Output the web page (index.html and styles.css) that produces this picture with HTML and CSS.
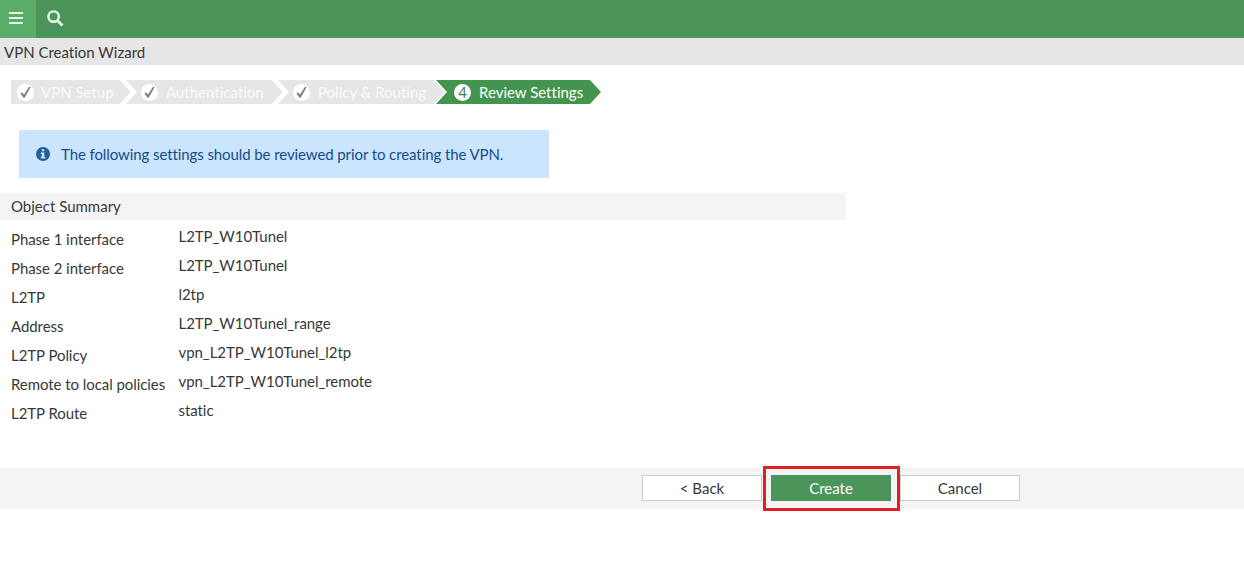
FILE: index.html
```html
<!DOCTYPE html>
<html lang="en">
<head>
  <meta charset="UTF-8" />
  <meta name="viewport" content="width=device-width, initial-scale=1.0"/>
  <title>VPN Creation Wizard</title>
  <link rel="stylesheet" href="styles.css">
</head>
<body>

  <div class="topbar">
    <div class="menu">
      <svg width="14" height="12" viewBox="0 0 14 12"><path d="M0 1h14M0 6h14M0 11h14" stroke="#e4ffe4" stroke-width="2"/></svg>
    </div>
    <svg class="search" width="17" height="17" viewBox="0 0 17 17" fill="none" stroke="#e4ffe4"><circle cx="6.6" cy="6.6" r="5.2" stroke-width="2.4"/><path d="M10.4 10.4l5 5" stroke-width="2.8"/></svg>
  </div>

  <h1 class="title">VPN Creation Wizard</h1>

  <div class="steps">
    <div class="step first">
      <svg class="dot" viewBox="0 0 17 17"><circle cx="8.5" cy="8.5" r="8.5" fill="#fff"/><path d="M3.4 9.2l1.7-1 1.9 2.4 5-7.8 1.8.2-6.1 10.7H6.3z" fill="#848484"/></svg>
      <span>VPN Setup</span>
    </div>
    <div class="step auth">
      <svg class="dot" viewBox="0 0 17 17"><circle cx="8.5" cy="8.5" r="8.5" fill="#fff"/><path d="M3.4 9.2l1.7-1 1.9 2.4 5-7.8 1.8.2-6.1 10.7H6.3z" fill="#848484"/></svg>
      <span>Authentication</span>
    </div>
    <div class="step policy">
      <svg class="dot" viewBox="0 0 17 17"><circle cx="8.5" cy="8.5" r="8.5" fill="#fff"/><path d="M3.4 9.2l1.7-1 1.9 2.4 5-7.8 1.8.2-6.1 10.7H6.3z" fill="#848484"/></svg>
      <span>Policy &amp; Routing</span>
    </div>
    <div class="step active">
      <b class="dot num">4</b>
      <span>Review Settings</span>
    </div>
  </div>

  <div class="info">
    <svg width="14" height="14" viewBox="0 0 14 14"><circle cx="7" cy="7" r="7" fill="#1f5f9c"/><path d="M5.8 2.2h2.5v2H5.8zM4.8 5.5h3.5v4.3h1v1.7H4.8V9.8h1V7.1h-1z" fill="#cbe5ff"/></svg>
    <span>The following settings should be reviewed prior to creating the VPN.</span>
  </div>

  <h2 class="summary-title">Object Summary</h2>
  <dl class="summary">
    <dt>Phase 1 interface</dt><dd>L2TP_W10Tunel</dd>
    <dt>Phase 2 interface</dt><dd>L2TP_W10Tunel</dd>
    <dt>L2TP</dt><dd>l2tp</dd>
    <dt>Address</dt><dd>L2TP_W10Tunel_range</dd>
    <dt>L2TP Policy</dt><dd>vpn_L2TP_W10Tunel_l2tp</dd>
    <dt>Remote to local policies</dt><dd>vpn_L2TP_W10Tunel_remote</dd>
    <dt>L2TP Route</dt><dd>static</dd>
  </dl>

  <div class="footer">
    <button class="button">&lt; Back</button>
    <div class="highlight"><button class="button create">Create</button></div>
    <button class="button">Cancel</button>
  </div>

</body>
</html>
```
FILE: styles.css
```css
* { box-sizing: border-box; }
body { min-height: 100vh; font-family: Lato, sans-serif; font-size: 15px; line-height: 20px; font-variant-ligatures: none; background: #fff; color: #383838; margin: 0; }
svg { display: block; flex: none; }

.topbar { display: flex; height: 38px; background: #4b955a; }
.menu { width: 36px; padding: 12px 0 0 9px; background: #5aac69; }
.search { margin: 10px 0 0 11px; }
.title { height: 27px; margin: 0; padding: 4px 4px 0; background: #e6e6e6; font-size: 15px; font-weight: 400; }

.steps { display: flex; margin: 15px 0 0 11px; }
.step { display: flex; align-items: center; flex: none; height: 24px; padding-left: 15px; margin-left: -5px; background: #e6e6e6; color: #fafafa; white-space: nowrap; clip-path: polygon(0 0, calc(100% - 11px) 0, 100% 50%, calc(100% - 11px) 100%, 0 100%, 11px 50%); }
.first { width: 120px; padding-left: 6px; margin-left: 0; clip-path: polygon(0 0, calc(100% - 11px) 0, 100% 50%, calc(100% - 11px) 100%, 0 100%); }
.auth { width: 157px; }
.policy { width: 167px; }
.active { width: 165px; padding-left: 18px; margin-left: -9px; background: #43944f; color: #fff; }
.dot { width: 17px; height: 17px; margin-right: 8px; }
.first .dot { margin-right: 7px; }
.num { border-radius: 50%; background: #fff; color: #43844d; font-weight: 400; line-height: 17px; text-align: center; }

.info { display: flex; align-items: center; gap: 11px; width: 530px; height: 48px; margin: 26px 0 0 19px; padding-left: 17px; background: #cbe5ff; color: #164b86; letter-spacing: -0.09px; }

.summary-title { width: 846px; height: 27px; margin: 15px 0 0; padding: 3px 11px; background: #f4f4f4; font-size: 15px; line-height: 20px; font-weight: 400; }
.summary { display: grid; grid-template-columns: 167.5px 1fr; grid-auto-rows: 29px; margin: 6px 0 0 11px; letter-spacing: -0.06px; }
.summary dt { padding-top: 3px; }
.summary dd { margin: 0; }

.footer { display: flex; align-items: flex-start; height: 41px; margin-top: 39px; padding: 7px 0 0 642px; background: #f4f4f4; }
.button { flex: none; width: 120px; height: 26px; padding: 0; background: #fff; color: #383838; border: 1px solid #ccc; font: inherit; cursor: pointer; }
.highlight { flex: none; width: 137px; height: 45px; margin: -9px 0 0 1px; padding: 6px 5px; border: 3px solid #e01f26; }
.create { display: block; background: #4b955a; border-color: #4b955a; color: #fff; }
```
